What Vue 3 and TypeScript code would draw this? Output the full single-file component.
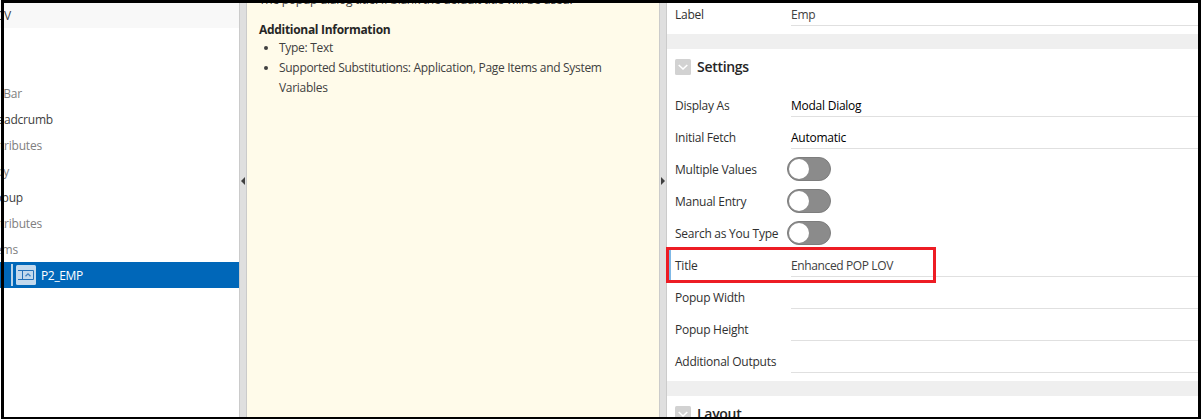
<script setup lang="ts">
interface TreeRow { text: string; kind: 'muted' | 'dark'; end: string }
interface Field { label: string; value?: string; toggle?: boolean; dark?: boolean; current?: boolean }

const tree: TreeRow[] = [
  { text: 'Navigation Bar', kind: 'muted', end: 'end22' },
  { text: 'Breadcrumb', kind: 'dark', end: 'end53' },
  { text: 'Attributes', kind: 'muted', end: 'end42' },
  { text: 'Body', kind: 'muted', end: 'end10' },
  { text: 'Popup', kind: 'dark', end: 'end23' },
  { text: 'Attributes', kind: 'muted', end: 'end42' },
  { text: 'Items', kind: 'muted', end: 'end18' },
]

const fields: Field[] = [
  { label: 'Display As', value: 'Modal Dialog', dark: true },
  { label: 'Initial Fetch', value: 'Automatic', dark: true },
  { label: 'Multiple Values', toggle: true },
  { label: 'Manual Entry', toggle: true },
  { label: 'Search as You Type', toggle: true },
  { label: 'Title', value: 'Enhanced POP LOV', current: true },
  { label: 'Popup Width', value: '' },
  { label: 'Popup Height', value: '' },
  { label: 'Additional Outputs', value: '' },
]
</script>

<template>
  <div class="screen">
    <aside class="tree">
      <div class="tree-head"><span>LOV</span></div>
      <div class="tree-gap"></div>
      <div v-for="(row, i) in tree" :key="i" class="tree-row" :class="[row.kind, row.end]">
        <span>{{ row.text }}</span>
      </div>
      <div class="tree-selected">
        <i class="guide"></i>
        <svg class="item-icon" width="20" height="20" viewBox="0 0 20 20">
          <rect width="20" height="20" rx="1.5" fill="#c3d9ed" />
          <path d="M2 5.5H17.5V14.5H2M6.5 5.5V14.5" fill="none" stroke="#2470b8" />
          <path d="M9.5 11.2L12 8.8L14.5 11.2" fill="none" stroke="#3e7fbf" stroke-width="1.3" />
        </svg>
        <span class="item-name">P2_EMP</span>
      </div>
    </aside>

    <div class="splitter">
      <svg width="4" height="8" viewBox="0 0 4 8"><path d="M4 0V8L0 4Z" fill="#404040" /></svg>
    </div>

    <section class="help">
      <p class="intro">The popup dialog title. If blank the default title will be used.</p>
      <h3>Additional Information</h3>
      <ul>
        <li>Type: Text</li>
        <li>Supported Substitutions: Application, Page Items and System<br />Variables</li>
      </ul>
    </section>

    <div class="splitter">
      <svg width="4" height="8" viewBox="0 0 4 8"><path d="M0 0V8L4 4Z" fill="#404040" /></svg>
    </div>

    <section class="props">
      <div class="field first">
        <label>Label</label>
        <div class="value">Emp</div>
      </div>
      <div class="band"></div>
      <div class="group">
        <svg width="16" height="16" viewBox="0 0 16 16">
          <rect width="16" height="16" rx="1.5" fill="#d2d2d2" />
          <path d="M3.7 6L8 10L12.3 6" fill="none" stroke="#fff" stroke-width="1.6" />
        </svg>
        <h2>Settings</h2>
      </div>
      <div v-for="f in fields" :key="f.label" class="field" :class="{ current: f.current }">
        <label>{{ f.label }}</label>
        <div v-if="f.toggle" class="toggle"><i></i></div>
        <div v-else class="value" :class="{ dark: f.dark }">{{ f.value }}</div>
      </div>
      <div class="band"></div>
      <div class="group">
        <svg width="16" height="16" viewBox="0 0 16 16">
          <rect width="16" height="16" rx="1.5" fill="#d2d2d2" />
          <path d="M3.7 6L8 10L12.3 6" fill="none" stroke="#fff" stroke-width="1.6" />
        </svg>
        <h2>Layout</h2>
      </div>
    </section>

    <div class="highlight"></div>
    <div class="frame"></div>
  </div>
</template>

<style>
body { margin: 0; overflow: hidden; }
</style>

<style scoped>
.screen {
  position: relative;
  display: flex;
  width: 1201px;
  height: 419px;
  overflow: hidden;
  background: #fff;
  color: #404040;
  font: 12px/20px "Open Sans", "Noto Sans", sans-serif;
  letter-spacing: -0.25px;
  white-space: nowrap;
}
.tree { flex: none; width: 239px; overflow: hidden; letter-spacing: -0.2px; }
.tree-head {
  display: flex;
  justify-content: flex-end;
  box-sizing: border-box;
  height: 28px;
  padding: 6px 228px 0 0;
  background: #f8f8f8;
}
.tree-gap { height: 52px; }
.tree-row {
  display: flex;
  align-items: center;
  justify-content: flex-end;
  height: 26px;
  box-sizing: border-box;
  padding-top: 2px;
}
.muted { color: #808080; }
.end22 { padding-right: 217px; }
.end53 { padding-right: 186px; }
.end42 { padding-right: 197px; }
.end10 { padding-right: 230px; }
.end23 { padding-right: 216px; }
.end18 { padding-right: 221px; }
.tree-selected {
  display: flex;
  align-items: center;
  height: 26px;
  padding-left: 11px;
  background: #0067b9;
  color: #fff;
}
.tree-selected .guide { width: 2px; height: 22px; background: #b9d4ea; }
.item-icon { margin: 0 5px 0 3px; }
.item-name { padding-top: 2px; letter-spacing: -0.35px; }
.splitter {
  flex: none;
  box-sizing: border-box;
  width: 8px;
  padding: 177px 0 0 1px;
  border: solid #cbcbcb;
  border-width: 0 1px;
  background: #dfdfdf;
}
.splitter svg { display: block; }
.help { flex: none; width: 400px; padding-left: 12px; background: #fffbea; letter-spacing: -0.3px; }
.intro { margin: -10px 0 0; letter-spacing: -0.26px; }
h3 { margin: 10px 0 0; font-size: 12px; line-height: 20px; font-weight: 700; color: #262626; }
ul { margin: -2px 0 0; padding-left: 20px; }
.props { flex: 1; color: #303030; }
.field { display: flex; align-items: center; box-sizing: border-box; height: 32px; padding-left: 8px; }
.field label { width: 116px; padding-top: 9px; line-height: 20px; }
.value {
  flex: 1;
  box-sizing: border-box;
  height: 32px;
  padding-top: 11px;
  border-bottom: 1px solid #e0e0e0;
  color: #404040;
}
.value.dark { color: #000; }
.current .value { letter-spacing: -0.38px; }
.first { margin-top: -6px; }
.band { height: 15px; margin-top: 8px; background: #efefef; }
.group { display: flex; align-items: center; gap: 6px; height: 36px; padding-left: 8px; }
h2 { margin: 0; font-size: 14px; line-height: 20px; font-weight: 600; letter-spacing: -0.3px; color: #262626; }
.toggle {
  box-sizing: border-box;
  width: 44px;
  height: 24px;
  margin: 8px 0 0 -4px;
  padding: 1px;
  border: 1px solid #7d7d7d;
  border-radius: 12px;
  background: #8b8b8b;
}
.toggle i { display: block; width: 20px; height: 20px; border-radius: 50%; background: #fff; }
.current { position: relative; }
.current::before {
  content: "";
  position: absolute;
  top: 4px;
  left: 0;
  width: 4px;
  height: 31px;
  background: #7fb8e6;
}
.highlight {
  position: absolute;
  top: 247px;
  left: 666px;
  box-sizing: border-box;
  width: 270px;
  height: 36px;
  border: 3px solid #ed1c24;
}
.frame {
  position: absolute;
  inset: 0 0 0 1px;
  border: solid #000;
  border-width: 3px 3px 2px;
}
</style>
